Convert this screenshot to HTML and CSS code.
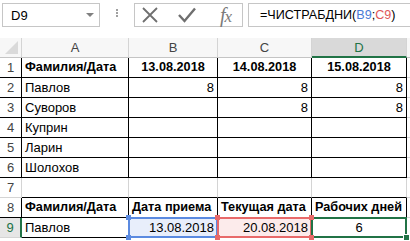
FILE: index.html
```html
<!DOCTYPE html>
<html lang="ru">
<head>
  <meta charset="UTF-8">
  <title>ЧИСТРАБДНИ</title>
  <link rel="stylesheet" href="styles.css">
</head>
<body>
  <div class="fbar">
    <div class="namebox"><span>D9</span><span class="arrow"></span></div>
    <div class="grip"><span></span></div>
    <div class="btns">
      <svg class="ico" width="18" height="18" viewBox="0 0 18 18"><path d="M2 2 L16 16 M16 2 L2 16" stroke="#6f6f6f" stroke-width="1.8" fill="none"/></svg>
      <svg class="ico" width="20" height="18" viewBox="0 0 20 18"><path d="M2 9 L7.5 15 L18 2.5" stroke="#6f6f6f" stroke-width="2.4" fill="none"/></svg>
      <span class="fx">f<i>x</i></span>
    </div>
    <div class="formula">=ЧИСТРАБДНИ(<span class="t-b">B9</span>;<span class="t-c">C9</span>)</div>
  </div>

  <div class="sheet">
    <!-- column headers -->
    <div class="hd corner"><span class="tri"></span></div>
    <div class="hd">A</div>
    <div class="hd">B</div>
    <div class="hd">C</div>
    <div class="hd on">D</div>
    <div class="hd"></div>

    <div class="rh k">1</div>
    <div class="c k b">Фамилия/Дата</div>
    <div class="c k b m">13.08.2018</div>
    <div class="c k b m">14.08.2018</div>
    <div class="c k b m">15.08.2018</div>
    <div class="c"></div>

    <div class="rh k">2</div>
    <div class="c k">Павлов</div>
    <div class="c k r">8</div>
    <div class="c k r">8</div>
    <div class="c k r">8</div>
    <div class="c"></div>

    <div class="rh k">3</div>
    <div class="c k">Суворов</div>
    <div class="c k"></div>
    <div class="c k r">8</div>
    <div class="c k r">8</div>
    <div class="c"></div>

    <div class="rh k">4</div>
    <div class="c k">Куприн</div>
    <div class="c k"></div>
    <div class="c k"></div>
    <div class="c k"></div>
    <div class="c"></div>

    <div class="rh k">5</div>
    <div class="c k">Ларин</div>
    <div class="c k"></div>
    <div class="c k"></div>
    <div class="c k"></div>
    <div class="c"></div>

    <div class="rh k">6</div>
    <div class="c k">Шолохов</div>
    <div class="c k"></div>
    <div class="c k"></div>
    <div class="c k"></div>
    <div class="c"></div>

    <div class="rh">7</div>
    <div class="c kb"></div>
    <div class="c kb"></div>
    <div class="c kb"></div>
    <div class="c kb"></div>
    <div class="c"></div>

    <div class="rh k">8</div>
    <div class="c k b">Фамилия/Дата</div>
    <div class="c k b">Дата приема</div>
    <div class="c k b">Текущая дата</div>
    <div class="c k b">Рабочих дней</div>
    <div class="c"></div>

    <div class="rh on">9</div>
    <div class="c k">Павлов</div>
    <div class="c k r ref blue">13.08.2018<span class="sq tl"></span><span class="sq tr"></span><span class="sq bl"></span><span class="sq br"></span></div>
    <div class="c k r ref red">20.08.2018<span class="sq tl"></span><span class="sq tr"></span><span class="sq bl"></span><span class="sq br"></span></div>
    <div class="c k m act">6<span class="fill"></span></div>
    <div class="c"></div>
  </div>
</body>
</html>
```

FILE: styles.css
```css
html, body {
  margin: 0;
  background: #fff;
}

body {
  width: 410px;
  height: 241px;
  overflow: hidden;
  font-family: "Liberation Sans", Arial, sans-serif;
  font-size: 13px;
  color: #000;
}

/* formula bar */

.fbar {
  display: flex;
  align-items: center;
  height: 24px;
  margin-top: 3px;
}

.namebox {
  box-sizing: border-box;
  display: flex;
  align-items: center;
  justify-content: space-between;
  width: 98px;
  height: 24px;
  margin-left: 2px;
  padding: 0 5px 0 8px;
  border: 1px solid #c6c6c6;
}

.arrow {
  width: 0;
  height: 0;
  border-left: 4px solid transparent;
  border-right: 4px solid transparent;
  border-top: 4px solid #808080;
}

.grip {
  display: flex;
  justify-content: center;
  width: 34px;
}

.grip span {
  width: 2px;
  height: 2px;
  margin-top: -6px;
  background: #a0a0a0;
  box-shadow: 0 3px 0 #a0a0a0, 0 6px 0 #a0a0a0;
}

.btns {
  box-sizing: border-box;
  display: flex;
  align-items: center;
  width: 109px;
  height: 24px;
  padding-left: 6px;
  border: 1px solid #c6c6c6;
}

.ico {
  display: block;
  margin-right: 18px;
}

.fx {
  margin-left: 5px;
  font-family: "Liberation Serif", serif;
  font-style: italic;
  font-size: 20px;
  color: #7a7a7a;
  letter-spacing: -1px;
}

.fx i {
  font-size: 17px;
}

.formula {
  box-sizing: border-box;
  flex: 1;
  height: 24px;
  margin-left: 5px;
  padding-left: 11px;
  line-height: 22px;
  border: 1px solid #c6c6c6;
  border-right: 0;
  font-size: 12.6px;
  white-space: nowrap;
}

.t-b { color: #4a7bd6; }
.t-c { color: #e0585a; }

/* sheet grid */

.sheet {
  display: grid;
  grid-template-columns: 22px 107px 89px 94px 95px 1fr;
  grid-auto-rows: 20px;
  margin-top: 11px;
}

.sheet > div {
  box-sizing: border-box;
  position: relative;
  border-right: 1px solid #d4d4d4;
  border-bottom: 1px solid #d4d4d4;
  line-height: 19px;
  white-space: nowrap;
}

.hd {
  background: #f7f7f7;
  color: #444;
  text-align: center;
  border-bottom-color: #c4c4c4 !important;
}

.hd.on {
  background: #d9d9d9;
  color: #217346;
  border-bottom: 2px solid #217346 !important;
}

.tri {
  position: absolute;
  right: 3px;
  bottom: 3px;
  width: 0;
  height: 0;
  border-left: 13px solid transparent;
  border-bottom: 13px solid #dadada;
}

.rh {
  background: #fff;
  color: #444;
  text-align: center;
}

.rh.k {
  border-right-color: #000 !important;
}

.rh.on {
  background: #e6e6e6;
  color: #217346;
  border-right: 2px solid #217346 !important;
}

.c {
  padding: 0 3px;
}

.k {
  border-right-color: #000 !important;
  border-bottom-color: #000 !important;
}

.kb {
  border-bottom-color: #000 !important;
}

.b {
  font-weight: bold;
  font-size: 12.7px;
}

.r { text-align: right; }
.m { text-align: center; }

/* references in the formula */

.ref::after {
  content: "";
  position: absolute;
  left: -1px;
  top: -1px;
  right: -1px;
  bottom: -1px;
  border: 2px solid;
}

.ref.blue { background: #e8eefb; }
.ref.blue::after { border-color: #5b8ae0; }
.ref.red { background: #fcebeb; }
.ref.red::after { border-color: #e86a6a; }

.sq {
  position: absolute;
  z-index: 1;
  width: 5px;
  height: 5px;
}

.blue .sq { background: #5b8ae0; }
.red .sq { background: #e86a6a; }

.sq.tl { left: -3px; top: -3px; }
.sq.tr { right: -3px; top: -3px; }
.sq.bl { left: -3px; bottom: -3px; }
.sq.br { right: -3px; bottom: -3px; }

.act::after {
  content: "";
  position: absolute;
  left: -1px;
  top: -1px;
  right: -1px;
  bottom: -1px;
  border: 2px solid #217346;
}

.fill {
  position: absolute;
  z-index: 1;
  right: -4px;
  bottom: -4px;
  width: 5px;
  height: 5px;
  background: #217346;
  border: 1px solid #fff;
}
```
